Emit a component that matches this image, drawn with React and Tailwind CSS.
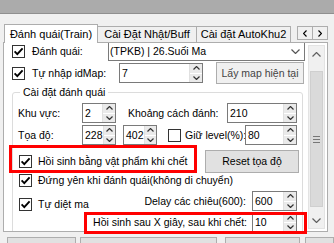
import React from 'react';

function Chev({ dir = 'down', w = 7, h = 4, color = '#333' }) {
    const paths = {
        up: `M0.5 ${h - 0.5} L${w / 2} 0.5 L${w - 0.5} ${h - 0.5}`,
        down: `M0.5 0.5 L${w / 2} ${h - 0.5} L${w - 0.5} 0.5`,
        left: `M${w - 0.5} 0.5 L0.5 ${h / 2} L${w - 0.5} ${h - 0.5}`,
        right: `M0.5 0.5 L${w - 0.5} ${h / 2} L0.5 ${h - 0.5}`,
    };
    return (
        <svg width={w} height={h} viewBox={`0 0 ${w} ${h}`} className="block">
            <path d={paths[dir]} fill="none" stroke={color} strokeWidth="1.2" />
        </svg>
    );
}

function Check({ checked }) {
    return (
        <span className="w-[13px] h-[13px] shrink-0 border border-[#333] bg-white flex items-center justify-center">
            {checked && (
                <svg width="11" height="11" viewBox="0 0 11 11" className="block">
                    <path d="M1.6 5.4 L4.3 8.1 L9.6 2.4" fill="none" stroke="#000" strokeWidth="1.9" />
                </svg>
            )}
        </span>
    );
}

function Spin({ value, className }) {
    return (
        <div className={`flex shrink-0 border border-[#7a7a7a] bg-white ${className}`}>
            <span className="flex-1 pl-[2px] flex items-center">{value}</span>
            <span className="w-[13px] flex flex-col border-l border-[#e0e0e0]">
                <span className="flex-1 bg-[#eaeaea] border-b border-white flex items-center justify-center">
                    <Chev dir="up" w={7} h={4} />
                </span>
                <span className="flex-1 bg-[#eaeaea] flex items-center justify-center">
                    <Chev dir="down" w={7} h={4} />
                </span>
            </span>
        </div>
    );
}

export default function App() {
    return (
        <div className="relative w-[334px] h-[243px] overflow-hidden whitespace-nowrap bg-[#f0f0f0] text-[10.5px] leading-[13px] text-black font-['Liberation_Sans',Arial,sans-serif]">
            <div className="h-[14px] bg-[#ababab] border-b border-[#8f8f8f]" />

            {/* tab control */}
            <div className="ml-[3px] mt-[10px] w-[325px]">
                <div className="flex items-end h-[18px]">
                    <div className="relative z-10 -mb-px ml-[1px] w-[94px] h-[19px] bg-white border border-b-0 border-[#adadad] flex items-center justify-center text-[11px]">
                        Đánh quái(Train)
                    </div>
                    <div className="w-[100px] -ml-px h-[16px] border border-b-0 border-[#adadad] flex items-center justify-center text-[11px]">
                        Cài Đặt Nhật/Buff
                    </div>
                    <div className="w-[95px] -ml-px h-[16px] border border-b-0 border-[#adadad] flex items-center justify-center text-[11px]">
                        Cài đặt AutoKhu2
                    </div>
                    <div className="ml-auto self-start mt-[2px] flex">
                        <div className="w-[16px] h-[14px] border border-[#adadad] bg-[#f0f0f0] flex items-center justify-center">
                            <Chev dir="left" w={4} h={7} color="#000" />
                        </div>
                        <div className="w-[16px] h-[14px] -ml-px border border-[#adadad] bg-[#f0f0f0] flex items-center justify-center">
                            <Chev dir="right" w={4} h={7} color="#000" />
                        </div>
                    </div>
                </div>

                <div className="h-[190px] border border-[#adadad] bg-white flex">
                    <div className="flex-1 overflow-hidden">
                        <div className="-mt-[2px]">
                            <div className="flex items-center h-[20px] pl-[8px]">
                                <Check checked />
                                <span className="ml-[7px] w-[76px]">Đánh quái:</span>
                                <div className="w-[197px] h-[20px] border border-[#7a7a7a] bg-white flex items-center pl-[1px] pr-[4px]">
                                    <span className="flex-1">(TPKB) | 26.Suối Ma</span>
                                    <Chev dir="down" w={9} h={5} color="#555" />
                                </div>
                            </div>

                            <div className="flex items-center h-[22px] mt-[1px] pl-[8px]">
                                <Check checked />
                                <span className="ml-[7px] w-[87px]">Tự nhập idMap:</span>
                                <Spin value="7" className="w-[84px] h-[20px]" />
                                <button className="ml-[13px] w-[88px] h-[22px] border border-[#adadad] bg-[#f0f0f0] text-[#444]">
                                    Lấy map hiện tại
                                </button>
                            </div>

                            <fieldset className="mt-[2px] ml-[8px] w-[291px] border border-[#dcdcdc] rounded-[3px] pl-[5px] pr-[5px]">
                                <legend className="ml-[2px] px-[3px] leading-[13px]">Cài đặt đánh quái</legend>

                                <div className="flex items-center h-[20px] mt-[4px]">
                                    <span className="w-[64px] shrink-0">Khu vực:</span>
                                    <Spin value="2" className="w-[34px] h-[20px]" />
                                    <span className="ml-[12px] w-[99px] shrink-0">Khoảng cách đánh:</span>
                                    <Spin value="210" className="w-[70px] h-[20px]" />
                                </div>

                                <div className="flex items-center h-[20px] mt-[2px]">
                                    <span className="w-[64px] shrink-0">Tọa độ:</span>
                                    <Spin value="228" className="w-[34px] h-[20px]" />
                                    <Spin value="402" className="ml-[7px] w-[34px] h-[20px]" />
                                    <span className="ml-[11px]">
                                        <Check />
                                    </span>
                                    <span className="ml-[4px] w-[60px] shrink-0">Giữ level(%):</span>
                                    <Spin value="80" className="w-[52px] h-[20px]" />
                                </div>

                                <div className="flex items-center h-[23px] mt-[5px]">
                                    <span className="ml-[1px]">
                                        <Check checked />
                                    </span>
                                    <span className="ml-[6px]">Hồi sinh bằng vật phẩm khi chết</span>
                                    <button className="ml-auto -mr-[2px] w-[94px] h-[23px] border border-[#adadad] bg-[#e1e1e1]">
                                        Reset tọa độ
                                    </button>
                                </div>

                                <div className="flex items-center h-[15px]">
                                    <span className="ml-[1px]">
                                        <Check checked />
                                    </span>
                                    <span className="ml-[6px]">Đứng yên khi đánh quái(không di chuyển)</span>
                                </div>

                                <div className="flex mt-[3px]">
                                    <div className="flex items-center h-[14px] mt-[6px]">
                                        <span className="ml-[1px]">
                                            <Check checked />
                                        </span>
                                        <span className="ml-[6px]">Tự diệt ma</span>
                                    </div>
                                    <div className="ml-auto shrink-0 flex flex-col items-end gap-[2px]">
                                        <div className="flex items-center gap-[6px] h-[20px]">
                                            <span>Delay các chiêu(600):</span>
                                            <Spin value="600" className="w-[45px] h-[20px]" />
                                        </div>
                                        <div className="flex items-center gap-[5px] h-[19px]">
                                            <span>Hồi sinh sau X giây, sau khi chết:</span>
                                            <Spin value="10" className="w-[45px] h-[19px]" />
                                        </div>
                                    </div>
                                </div>
                                <div className="h-[20px]" />
                            </fieldset>
                        </div>
                    </div>

                    {/* vertical scrollbar */}
                    <div className="w-[17px] h-[184px] mt-[2px] mr-[2px] flex flex-col bg-[#f0f0f0] border border-[#e3e3e3]">
                        <div className="h-[16px] flex items-center justify-center">
                            <Chev dir="up" w={9} h={5} color="#606060" />
                        </div>
                        <div className="flex-1 px-[1px] pt-[9px] pb-[5px]">
                            <div className="h-full bg-[#dadada] border border-[#cfcfcf] flex flex-col items-center justify-center gap-[2px]">
                                <span className="w-[7px] h-px bg-[#777]" />
                                <span className="w-[7px] h-px bg-[#777]" />
                                <span className="w-[7px] h-px bg-[#777]" />
                            </div>
                        </div>
                        <div className="h-[16px] flex items-center justify-center">
                            <Chev dir="down" w={9} h={5} color="#606060" />
                        </div>
                    </div>
                </div>
            </div>

            {/* bottom buttons, cut off by the window */}
            <div className="flex pl-[7px] mt-[5px]">
                <div className="w-[71px] h-[20px] border border-[#adadad] bg-[#e1e1e1]" />
                <div className="ml-[4px] w-[140px] h-[20px] border border-[#adadad] bg-[#e1e1e1]" />
                <div className="ml-[8px] w-[77px] h-[20px] border border-[#adadad] bg-[#e1e1e1]" />
                <div className="ml-[5px] w-[30px] h-[20px] border border-[#adadad] bg-[#e1e1e1]" />
            </div>

            {/* red annotation boxes */}
            <div className="absolute left-[9px] top-[145px] w-[188px] h-[28px] border-[3px] border-[#ff0000]" />
            <div className="absolute left-[84px] top-[212px] w-[223px] h-[22px] border-[3px] border-[#ff0000]" />
        </div>
    );
}
